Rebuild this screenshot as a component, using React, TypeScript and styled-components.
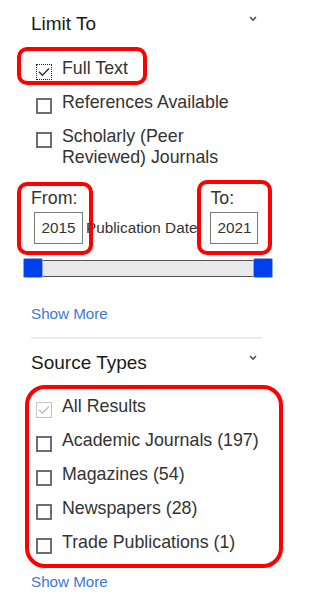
import { createGlobalStyle, styled } from 'styled-components'

const GlobalStyle = createGlobalStyle`
  body {
    margin: 0;
    background: #fff;
    font-family: 'Liberation Sans', Arial, sans-serif;
  }
`

const Panel = styled.div`
  box-sizing: border-box;
  width: 320px;
  padding: 12px 58px 0 31px;
  display: flex;
  flex-direction: column;
`

const Header = styled.div<{ $mt?: number }>`
  display: flex;
  justify-content: space-between;
  align-items: flex-start;
  margin-top: ${(p) => p.$mt ?? 0}px;
`

const Title = styled.h2`
  margin: 0;
  font-size: 19px;
  line-height: 24px;
  font-weight: normal;
  color: #1a1a1a;
`

const Chevron = styled.svg`
  margin: 4px 5px 0 0;
  flex: none;
`

const List = styled.div<{ $mt: number; $max?: number }>`
  position: relative;
  display: flex;
  flex-direction: column;
  align-items: flex-start;
  gap: 12px;
  margin: ${(p) => p.$mt}px 0 0 5px;
  max-width: ${(p) => (p.$max ? `${p.$max}px` : 'none')};
`

const Row = styled.label`
  position: relative;
  display: flex;
  align-items: flex-start;
  gap: 10px;
`

const boxBorder = {
  off: '2px solid #6e6e6e',
  on: '1.5px dotted #222',
  disabled: '1px solid #c4c4c4'
}

const Box = styled.span<{ $state: 'off' | 'on' | 'disabled' }>`
  box-sizing: border-box;
  flex: none;
  width: 16px;
  height: 16px;
  margin-top: 6px;
  display: flex;
  align-items: center;
  justify-content: center;
  border: ${(p) => boxBorder[p.$state]};
  background: #fff;
`

const LabelText = styled.span`
  font-size: 17.8px;
  line-height: 21px;
  color: #333;
`

const Callout = styled.span<{ $t: number; $r: number; $b: number; $l: number; $radius: number }>`
  position: absolute;
  top: ${(p) => p.$t}px;
  right: ${(p) => p.$r}px;
  bottom: ${(p) => p.$b}px;
  left: ${(p) => p.$l}px;
  border: 4px solid #ff0000;
  border-radius: ${(p) => p.$radius}px;
  pointer-events: none;
`

const DateRow = styled.div`
  display: flex;
  align-items: flex-end;
  margin-top: 20px;
`

const Field = styled.div<{ $ml?: number }>`
  position: relative;
  display: flex;
  flex-direction: column;
  align-items: flex-start;
  margin-left: ${(p) => p.$ml ?? 0}px;
`

const FieldLabel = styled.span`
  font-size: 17.8px;
  line-height: 20px;
  color: #333;
`

const YearInput = styled.input<{ $w: number; $indent?: number }>`
  box-sizing: border-box;
  width: ${(p) => p.$w}px;
  height: 32px;
  margin: 4px 0 0 ${(p) => p.$indent ?? 0}px;
  padding: 0;
  border: 1px solid #7a7a7a;
  font-family: 'Liberation Sans', Arial, sans-serif;
  font-size: 15.3px;
  color: #333;
  text-align: center;
  background: #fff;
`

const DateCaption = styled.span`
  margin-left: 3px;
  font-size: 15.3px;
  line-height: 32px;
  color: #333;
  white-space: nowrap;
`

const Slider = styled.div`
  position: relative;
  width: 250px;
  height: 20px;
  margin: 14px 0 0 -8px;
`

const Track = styled.div`
  margin-top: 2px;
  height: 15px;
  background: #e9e9e9;
  border-top: 1px solid #555;
  border-bottom: 1px solid #555;
`

const Thumb = styled.span<{ $side: 'left' | 'right' }>`
  position: absolute;
  top: 0;
  ${(p) => p.$side}: 0;
  box-sizing: border-box;
  width: 20px;
  height: 20px;
  background: #0041ee;
  border: 1px solid #8ea6e4;
  border-radius: 2px;
`

const ShowMore = styled.a<{ $mt: number }>`
  align-self: flex-start;
  margin-top: ${(p) => p.$mt}px;
  font-size: 15.2px;
  line-height: 18px;
  color: #3b7ade;
  text-decoration: none;
  cursor: pointer;
`

const Divider = styled.hr`
  margin: 14px 0 0;
  height: 2px;
  border: 0;
  background: #ececec;
`

type CheckState = 'off' | 'on' | 'disabled'

const Check = ({ state }: { state: CheckState }) => (
  <Box $state={state}>
    {state !== 'off' && (
      <svg width='12' height='12' viewBox='0 0 12 12'>
        <path
          d='M1 5.8 L4.4 9.2 L11 2.4'
          fill='none'
          stroke={state === 'disabled' ? '#bdbdbd' : '#333'}
          strokeWidth='1.5'
        />
      </svg>
    )}
  </Box>
)

const Toggle = () => (
  <Chevron width='8' height='6' viewBox='0 0 8 6'>
    <path d='M1 1 L4 4 L7 1' fill='none' stroke='#555' strokeWidth='1.6' />
  </Chevron>
)

const sourceTypes: { label: string; state: CheckState }[] = [
  { label: 'All Results', state: 'disabled' },
  { label: 'Academic Journals (197)', state: 'off' },
  { label: 'Magazines (54)', state: 'off' },
  { label: 'Newspapers (28)', state: 'off' },
  { label: 'Trade Publications (1)', state: 'off' }
]

const App = () => {
  return (
    <>
      <GlobalStyle />
      <Panel>
        <Header>
          <Title>Limit To</Title>
          <Toggle />
        </Header>
        <List $mt={22} $max={206}>
          <Row>
            <Check state='on' />
            <LabelText>Full Text</LabelText>
            <Callout $t={-11} $r={-19} $b={-5} $l={-19} $radius={10} />
          </Row>
          <Row>
            <Check state='off' />
            <LabelText>References Available</LabelText>
          </Row>
          <Row>
            <Check state='off' />
            <LabelText>Scholarly (Peer Reviewed) Journals</LabelText>
          </Row>
        </List>
        <DateRow>
          <Field>
            <FieldLabel>From:</FieldLabel>
            <YearInput $w={49} $indent={3} defaultValue='2015' readOnly />
            <Callout $t={-6} $r={-10} $b={-11} $l={-14} $radius={10} />
          </Field>
          <DateCaption>Publication Date</DateCaption>
          <Field $ml={13}>
            <FieldLabel>To:</FieldLabel>
            <YearInput $w={48} defaultValue='2021' readOnly />
            <Callout $t={-8} $r={-14} $b={-11} $l={-13} $radius={10} />
          </Field>
        </DateRow>
        <Slider>
          <Track />
          <Thumb $side='left' />
          <Thumb $side='right' />
        </Slider>
        <ShowMore $mt={27}>Show More</ShowMore>
        <Divider />
        <Header $mt={12}>
          <Title>Source Types</Title>
          <Toggle />
        </Header>
        <List $mt={21}>
          {sourceTypes.map((s) => (
            <Row key={s.label}>
              <Check state={s.state} />
              <LabelText>{s.label}</LabelText>
            </Row>
          ))}
          <Callout $t={-11} $r={-21} $b={-14} $l={-11} $radius={20} />
        </List>
        <ShowMore $mt={19}>Show More</ShowMore>
      </Panel>
    </>
  )
}

export default App
